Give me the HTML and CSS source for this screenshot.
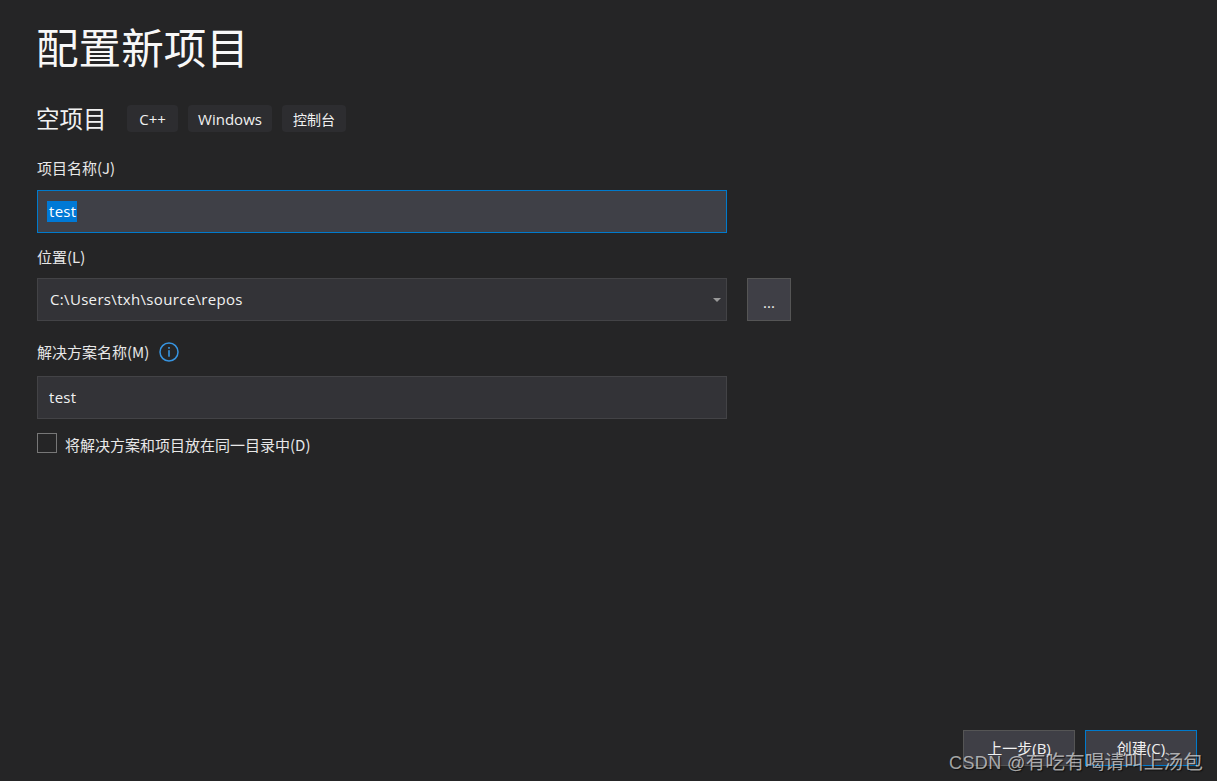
FILE: index.html
```html
<!DOCTYPE html>
<html lang="zh-CN">
<head>
<meta charset="utf-8">
<title>配置新项目</title>
<link rel="stylesheet" href="styles.css">
</head>
<body>
<main class="page">
  <h1 class="title">配置新项目</h1>
  <div class="subhead">
    <h2 class="template">空项目</h2>
    <ul class="chips">
      <li class="chip">C++</li>
      <li class="chip chip-wide">Windows</li>
      <li class="chip chip-cjk">控制台</li>
    </ul>
  </div>
  <div class="label label-name">项目名称(J)</div>
  <div class="field field-focus"><span class="selected">test</span></div>
  <div class="label label-loc">位置(L)</div>
  <div class="row">
    <div class="field field-combo">
      <span class="combo-text">C:\Users\txh\source\repos</span>
      <span class="caret"></span>
    </div>
    <div class="browse">...</div>
  </div>
  <div class="label label-sol">
    <span>解决方案名称(M)</span>
    <svg class="info" width="20" height="20" viewBox="0 0 20 20" aria-hidden="true">
      <circle cx="10" cy="10" r="9" fill="none" stroke="#3794e0" stroke-width="1.5"/>
      <rect x="9.2" y="5" width="1.6" height="1.8" fill="#3794e0"/>
      <rect x="9.2" y="8.2" width="1.6" height="6.5" fill="#3794e0"/>
    </svg>
  </div>
  <div class="field field-sol"><span class="sol-text">test</span></div>
  <label class="check">
    <span class="box"></span>
    <span class="check-text">将解决方案和项目放在同一目录中(D)</span>
  </label>
  <div class="spacer"></div>
  <div class="actions">
    <div class="btn">上一步(B)</div>
    <div class="btn btn-primary">创建(C)</div>
  </div>
</main>
<div class="watermark"><span class="wm-latin">CSDN @</span>有吃有喝请叫上汤包</div>
</body>
</html>
```
FILE: styles.css
```css
* { box-sizing: border-box; }
html, body { margin: 0; height: 100%; }
body {
  background: #252526;
  color: #f1f1f1;
  font-family: "Open Sans", "Noto Sans CJK SC", sans-serif;
  font-size: 15px;
  overflow: hidden;
}
.page {
  display: flex;
  flex-direction: column;
  height: 781px;
  padding: 0 20px 15px 37px;
}
.title {
  margin: 18px 0 0 -1px;
  font-size: 42.6px;
  font-weight: 400;
  line-height: 56px;
  height: 57px;
  color: #f8f8f8;
  font-family: "Noto Sans CJK SC", sans-serif;
}
.subhead {
  display: flex;
  align-items: center;
  margin-top: 30px;
  height: 27px;
}
.template {
  margin: -2px 0 0 -1px;
  font-size: 23.5px;
  font-weight: 400;
  width: 91px;
  font-family: "Noto Sans CJK SC", sans-serif;
  color: #f1f1f1;
}
.chips {
  display: flex;
  gap: 10px;
  list-style: none;
  margin: 0;
  padding: 0;
}
.chip {
  height: 27px;
  line-height: 29px;
  padding: 0 11px;
  background: #2d2d30;
  border-radius: 4px;
  color: #f1f1f1;
  min-width: 51px;
  text-align: center;
}
.chip-wide { width: 84px; padding: 0; }
.chip-cjk { font-size: 14px; }
.label {
  color: #e8e8e8;
  line-height: 20px;
  height: 20px;
  display: flex;
  align-items: center;
  font-family: "Noto Sans CJK SC", sans-serif;
}
.label-name { margin-top: 26px; }
.label-loc { margin-top: 14px; }
.label-sol { margin-top: 21px; gap: 10px; }
.field {
  width: 690px;
  height: 43px;
  background: #333337;
  border: 1px solid #434346;
  display: flex;
  align-items: center;
  padding: 0 11px;
  color: #f1f1f1;
}
.field-focus {
  margin-top: 12px;
  background: #3f4047;
  border-color: #007acc;
  padding: 0 9px;
}
.selected {
  background: #0079d6;
  color: #fff;
  height: 21px;
  line-height: 21px;
  padding: 0 1px 0 2px;
  letter-spacing: 0.3px;
}
.row {
  display: flex;
  gap: 20px;
  margin-top: 11px;
}
.field-combo {
  justify-content: space-between;
  padding: 0 5px 0 12px;
}
.combo-text {
  letter-spacing: 0.33px;
  margin-top: -2px;
}
.caret {
  width: 0;
  height: 0;
  border-left: 4px solid transparent;
  border-right: 4px solid transparent;
  border-top: 4px solid #999;
  margin-top: 1px;
}
.browse {
  width: 44px;
  height: 43px;
  background: #3f3f46;
  border: 1px solid #555;
  text-align: center;
  line-height: 46px;
  color: #f1f1f1;
}
.field-sol { margin-top: 14px; letter-spacing: 0.3px; }
.sol-text { margin-top: -2px; }
.check {
  display: flex;
  align-items: center;
  gap: 8px;
  margin-top: 14px;
  height: 20px;
  color: #e8e8e8;
}
.check-text {
  font-family: "Noto Sans CJK SC", sans-serif;
  line-height: 24px;
  height: 24px;
  margin-top: 4px;
}
.box {
  width: 20px;
  height: 20px;
  border: 1px solid #777;
}
.spacer { flex: 1; }
.actions {
  display: flex;
  justify-content: flex-end;
  gap: 10px;
}
.btn {
  width: 112px;
  height: 36px;
  background: #3f3f46;
  border: 1px solid #555;
  text-align: center;
  line-height: 35px;
  color: #f1f1f1;
}
.btn-primary { border-color: #007acc; }
.watermark {
  position: absolute;
  left: 949px;
  top: 749px;
  font-size: 19.7px;
  line-height: 27px;
  color: rgba(255, 255, 255, 0.62);
  text-shadow: 1px 1px 1px rgba(0, 0, 0, 0.6);
  font-family: "Liberation Sans", "Noto Sans CJK SC", sans-serif;
  white-space: nowrap;
}
.wm-latin { font-size: 18px; letter-spacing: 0.4px; }
```
